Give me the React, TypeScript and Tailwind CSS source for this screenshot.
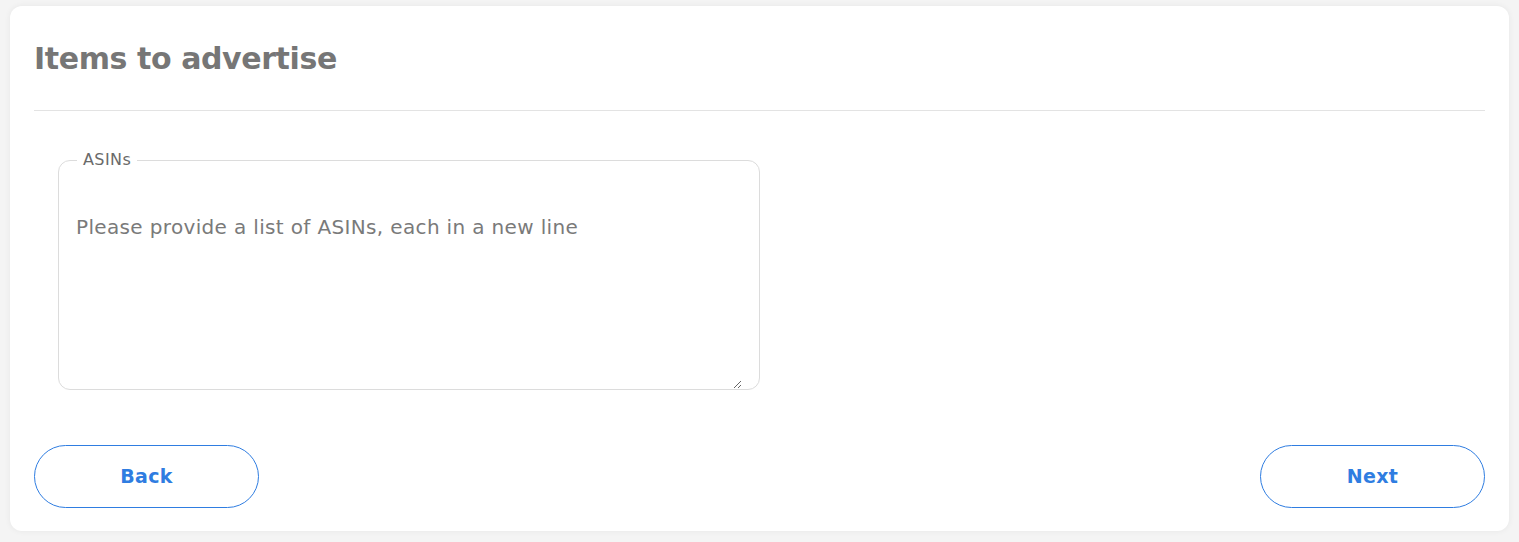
import React from "react";

export default function App() {
  return (
    <div
      className="min-h-screen bg-[#f4f4f4] px-[10px] pt-[6px] pb-[11px]"
      style={{ fontFamily: "'DejaVu Sans', sans-serif" }}
    >
      <div className="rounded-[12px] bg-white px-6 pb-[23px] shadow-[0_0_6px_rgba(0,0,0,0.06)]">
        <div className="flex h-[105px] items-center border-b border-[#e3e3e3]">
          <h1 className="text-[30px] font-bold tracking-[-0.4px] text-[#767676]">Items to advertise</h1>
        </div>
        <div className="px-6 pt-[49px]">
          <div className="relative flex h-[230px] w-[702px] rounded-[12px] border border-[#dcdcdc] bg-white px-[17px]">
            <span className="absolute left-[18px] top-[-12px] bg-white px-[6px] text-[16px] leading-[22px] tracking-[0.4px] text-[#6a6a6a]">
              ASINs
            </span>
            <textarea
              className="block h-full w-full resize-y border-0 bg-transparent p-0 pt-[52px] text-[20px] leading-[28px] tracking-[0.35px] text-[#555] outline-none placeholder:text-[#7a7a7a]"
              placeholder="Please provide a list of ASINs, each in a new line"
            />
          </div>
        </div>
        <div className="mt-[55px] flex items-center justify-between">
          <button className="flex h-[63px] w-[225px] items-center justify-center rounded-full border border-[#2f7de1] text-[19px] font-bold tracking-[0.3px] text-[#2f7de1]">
            Back
          </button>
          <button className="flex h-[63px] w-[225px] items-center justify-center rounded-full border border-[#2f7de1] text-[19px] font-bold tracking-[0.3px] text-[#2f7de1]">
            Next
          </button>
        </div>
      </div>
    </div>
  );
}
